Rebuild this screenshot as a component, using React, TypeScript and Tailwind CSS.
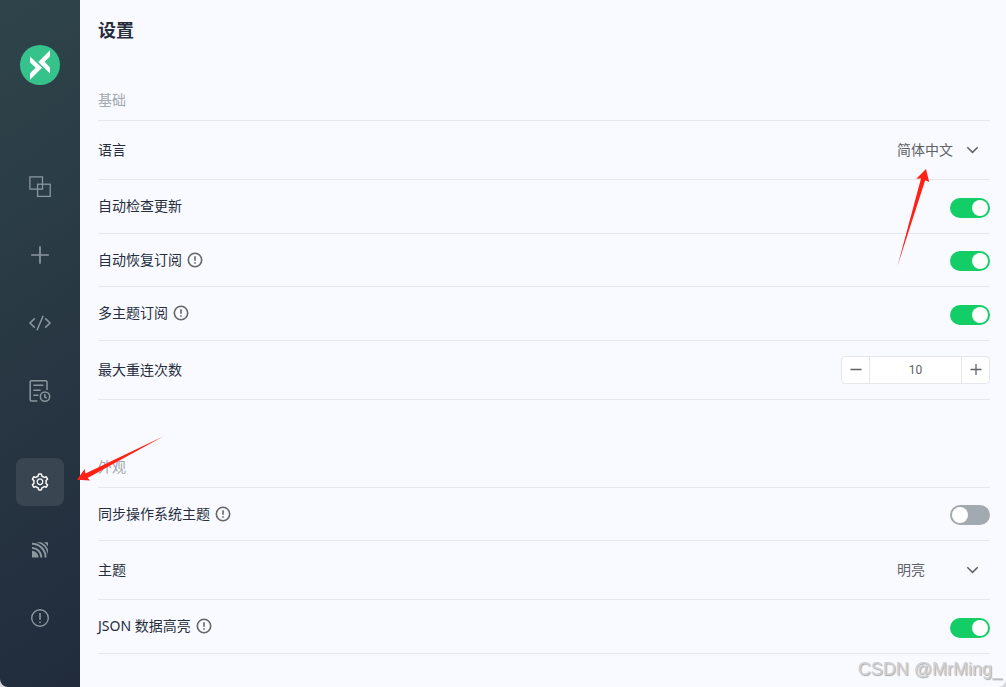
import { useId, useState } from "react";
import type { ReactNode } from "react";
import { AiOutlineSetting } from "react-icons/ai";

function LogoIcon() {
  return (
    <svg className="size-10" viewBox="0 0 40 40" aria-hidden="true">
      <circle cx="20" cy="20" r="20" fill="#36c38b" />
      <path fill="#fff" d="M10 11.6 L22 22.8 L10 34.8 V28.2 L15.6 22.8 L10 17.6 Z" />
      <path fill="#fff" d="M30 5.2 V11.4 L24.6 16.8 L30 22.4 V28.6 L18.2 17 Z" />
    </svg>
  );
}

function ConnectionsIcon() {
  return (
    <svg className="size-6" viewBox="0 0 24 24" fill="none" stroke="currentColor" strokeWidth="1.3" aria-hidden="true">
      <rect x="1.9" y="1.9" width="12.6" height="12.2" />
      <rect x="9.6" y="9.2" width="12.6" height="12.2" />
    </svg>
  );
}

function PlusIcon() {
  return (
    <svg className="size-6" viewBox="0 0 24 24" fill="none" stroke="currentColor" strokeWidth="1.7" aria-hidden="true">
      <path d="M12 3.2V20.8M3.2 12H20.8" />
    </svg>
  );
}

function ScriptIcon() {
  return (
    <svg className="size-6" viewBox="0 0 24 24" fill="none" stroke="currentColor" strokeWidth="1.5" aria-hidden="true">
      <path d="M6.8 7.4L2 12L6.8 16.6M17.2 7.4L22 12L17.2 16.6M15.2 4.8L9 19.2" />
    </svg>
  );
}

function LogIcon() {
  return (
    <svg className="size-6" viewBox="0 0 24 24" fill="none" stroke="currentColor" strokeWidth="1.5" aria-hidden="true">
      <path d="M9.4 22H3.4Q2.2 22 2.2 20.8V2.8Q2.2 1.8 3.4 1.8H17.8Q19 1.8 19 3V11" />
      <path d="M5.4 6.2H15.4M5.4 11.2H12.6M5.4 16.2H10.4" />
      <circle cx="17" cy="17.6" r="4.7" />
      <path d="M16.8 15V18L18.8 19.2" />
    </svg>
  );
}

function FeedIcon() {
  return (
    <svg className="size-4" viewBox="0 0 16 16" aria-hidden="true">
      <path fill="currentColor" d="M0 8.8A6.6 6.6 0 0 1 6.6 15.4H0Z" />
      <path
        fill="none"
        stroke="currentColor"
        strokeWidth="2.1"
        d="M0 6A9.4 9.4 0 0 1 9.4 15.4M0 1.8A13.6 13.6 0 0 1 13.6 15.4"
      />
      <path fill="currentColor" d="M4.5 0.2H9.4A14.6 14.6 0 0 1 16 7.6V12.6A16 16 0 0 0 4.5 0.2Z" />
      <path fill="currentColor" d="M12 0.2H16V4.6A14 14 0 0 0 12 0.2Z" />
    </svg>
  );
}

function AboutIcon() {
  return (
    <svg className="size-5" viewBox="0 0 20 20" fill="none" stroke="currentColor" strokeWidth="1.4" aria-hidden="true">
      <circle cx="10" cy="10" r="8.3" />
      <path d="M10 5V11.8M10 13.4V15" strokeWidth="1.6" />
    </svg>
  );
}

function HintIcon() {
  return (
    <svg
      className="ml-[5px] size-4"
      viewBox="0 0 16 16"
      fill="none"
      stroke="#666"
      strokeWidth="1.6"
      role="img"
      aria-label="提示"
    >
      <circle cx="8" cy="8" r="6.7" />
      <path d="M8 4.2V8.8M8 10.2V11.8" />
    </svg>
  );
}

function NavButton({ label, active, children }: { label: string; active?: boolean; children: ReactNode }) {
  return (
    <button
      type="button"
      aria-label={label}
      aria-current={active ? "page" : undefined}
      className={
        active
          ? "grid size-12 place-items-center rounded-lg bg-[#3a4552] text-white"
          : "grid size-12 place-items-center rounded-lg text-[#8a979e]"
      }
    >
      {children}
    </button>
  );
}

function Sidebar() {
  return (
    <nav className="flex w-20 shrink-0 flex-col items-center rounded-bl-lg bg-linear-[145deg] from-[#2f444a] to-[#212b3c] pt-[45px]">
      <LogoIcon />
      <div className="mt-[78px] flex flex-col gap-5">
        <NavButton label="连接"><ConnectionsIcon /></NavButton>
        <NavButton label="新建"><PlusIcon /></NavButton>
        <NavButton label="脚本"><ScriptIcon /></NavButton>
        <NavButton label="日志"><LogIcon /></NavButton>
      </div>
      <div className="mt-[43px] flex flex-col gap-5">
        <NavButton label="设置" active><AiOutlineSetting className="size-5" /></NavButton>
        <NavButton label="订阅"><FeedIcon /></NavButton>
        <NavButton label="关于"><AboutIcon /></NavButton>
      </div>
    </nav>
  );
}

const rowHeights = { tall: "h-[59px]", normal: "h-[54px]", compact: "h-[53px]" };

function Row({
  id,
  label,
  hint,
  size,
  children,
}: {
  id: string;
  label: string;
  hint?: boolean;
  size: keyof typeof rowHeights;
  children: ReactNode;
}) {
  return (
    <div className={`${rowHeights[size]} flex items-center justify-between border-b border-[#e4e7ed]`}>
      <div className={size === "tall" ? "flex items-center" : "flex items-center pb-px"}>
        <label htmlFor={id}>{label}</label>
        {hint && <HintIcon />}
      </div>
      {children}
    </div>
  );
}

function SwitchRow({
  label,
  hint,
  size,
  initial,
}: {
  label: string;
  hint?: boolean;
  size: keyof typeof rowHeights;
  initial: boolean;
}) {
  const id = useId();
  return (
    <Row id={id} label={label} hint={hint} size={size}>
      <span className="mt-0.5 grid h-5 w-10">
        <input
          id={id}
          type="checkbox"
          role="switch"
          defaultChecked={initial}
          className="peer col-start-1 row-start-1 h-5 w-10 appearance-none rounded-full bg-[#a2a9b0] checked:bg-[#13ce66]"
        />
        <span className="pointer-events-none col-start-1 row-start-1 mt-0.5 ml-0.5 size-4 rounded-full bg-white peer-checked:ml-[22px]" />
      </span>
    </Row>
  );
}

function SelectRow({ label, options }: { label: string; options: string[] }) {
  const id = useId();
  return (
    <Row id={id} label={label} size="tall">
      <span className="grid w-[108px] items-center">
        <select id={id} className="col-start-1 row-start-1 h-8 w-full appearance-none bg-transparent pl-[15px] text-[#606266]">
          {options.map((option) => (
            <option key={option}>{option}</option>
          ))}
        </select>
        <svg
          className="pointer-events-none col-start-1 row-start-1 mr-3 h-3 w-3 justify-self-end"
          viewBox="0 0 12 12"
          fill="none"
          stroke="#606266"
          strokeWidth="1.5"
          aria-hidden="true"
        >
          <path d="M1.3 3.2L6.5 8.4L11.7 3.2" />
        </svg>
      </span>
    </Row>
  );
}

function StepperRow({ label, initial }: { label: string; initial: number }) {
  const id = useId();
  const [value, setValue] = useState(initial);
  return (
    <Row id={id} label={label} size="tall">
      <div className="flex h-7 w-[149px] overflow-hidden rounded border border-[#e4e7ed] bg-white">
        <button
          type="button"
          aria-label="减少"
          onClick={() => setValue(value - 1)}
          className="grid w-7 shrink-0 place-items-center border-r border-[#e4e7ed]"
        >
          <svg className="size-3" viewBox="0 0 12 12" stroke="#606266" strokeWidth="1.3" aria-hidden="true">
            <path d="M0.5 5.5H11.5" />
          </svg>
        </button>
        <input
          id={id}
          value={value}
          inputMode="numeric"
          onChange={(event) => setValue(Number(event.target.value) || 0)}
          className="w-full min-w-0 text-center font-['Roboto','Liberation_Sans',sans-serif] text-xs text-[#606266]"
        />
        <button
          type="button"
          aria-label="增加"
          onClick={() => setValue(value + 1)}
          className="grid w-7 shrink-0 place-items-center border-l border-[#e4e7ed]"
        >
          <svg className="size-3" viewBox="0 0 12 12" stroke="#606266" strokeWidth="1.3" aria-hidden="true">
            <path d="M0.5 5.5H11.5M6 0V11" />
          </svg>
        </button>
      </div>
    </Row>
  );
}

function SectionTitle({ children }: { children: ReactNode }) {
  return <h2 className="border-b border-[#e4e7ed] pb-[9px] leading-[22px] text-[#a2a9b0]">{children}</h2>;
}

export default function App() {
  return (
    <div className="bg-[#d5d7da]">
      <div className="flex min-h-screen font-['Noto_Sans','Noto_Sans_CJK_SC',sans-serif] text-sm text-[#262e3e]">
        <Sidebar />
        <main className="relative flex-1 rounded-br-lg bg-[#f9faff] pt-4 pr-4 pl-[18px]">
          <h1 className="text-lg leading-7 font-bold">设置</h1>
          <section className="mt-[45px]">
            <SectionTitle>基础</SectionTitle>
            <SelectRow label="语言" options={["简体中文", "English"]} />
            <SwitchRow label="自动检查更新" size="normal" initial />
            <SwitchRow label="自动恢复订阅" hint size="compact" initial />
            <SwitchRow label="多主题订阅" hint size="normal" initial />
            <StepperRow label="最大重连次数" initial={10} />
          </section>
          <section className="mt-14">
            <SectionTitle>外观</SectionTitle>
            <SwitchRow label="同步操作系统主题" hint size="compact" initial={false} />
            <SelectRow label="主题" options={["明亮", "暗黑"]} />
            <SwitchRow label="JSON 数据高亮" hint size="normal" initial />
          </section>

          <svg
            className="pointer-events-none absolute top-[168px] right-[74px] h-[100px] w-9"
            viewBox="896 168 36 100"
            aria-hidden="true"
          >
            <path fill="#ff2116" d="M926 169L929.2 182L925.2 180.2L897.5 266L921 178.5L916.3 178.8Z" />
          </svg>
          <svg
            className="pointer-events-none absolute top-[434px] -left-1 h-[50px] w-[90px]"
            viewBox="76 434 90 50"
            aria-hidden="true"
          >
            <path fill="#ff2116" d="M77 479.8L84.7 469L85.4 473.6L163.5 436.3L87.6 478L90.2 480.6Z" />
          </svg>
          <p className="pointer-events-none absolute right-1 bottom-1 font-['Liberation_Sans',sans-serif] text-lg leading-7 text-[#d0d1d4] [text-shadow:1px_1px_1px_#a8a8a8]">
            CSDN @MrMing_
          </p>
        </main>
      </div>
    </div>
  );
}
